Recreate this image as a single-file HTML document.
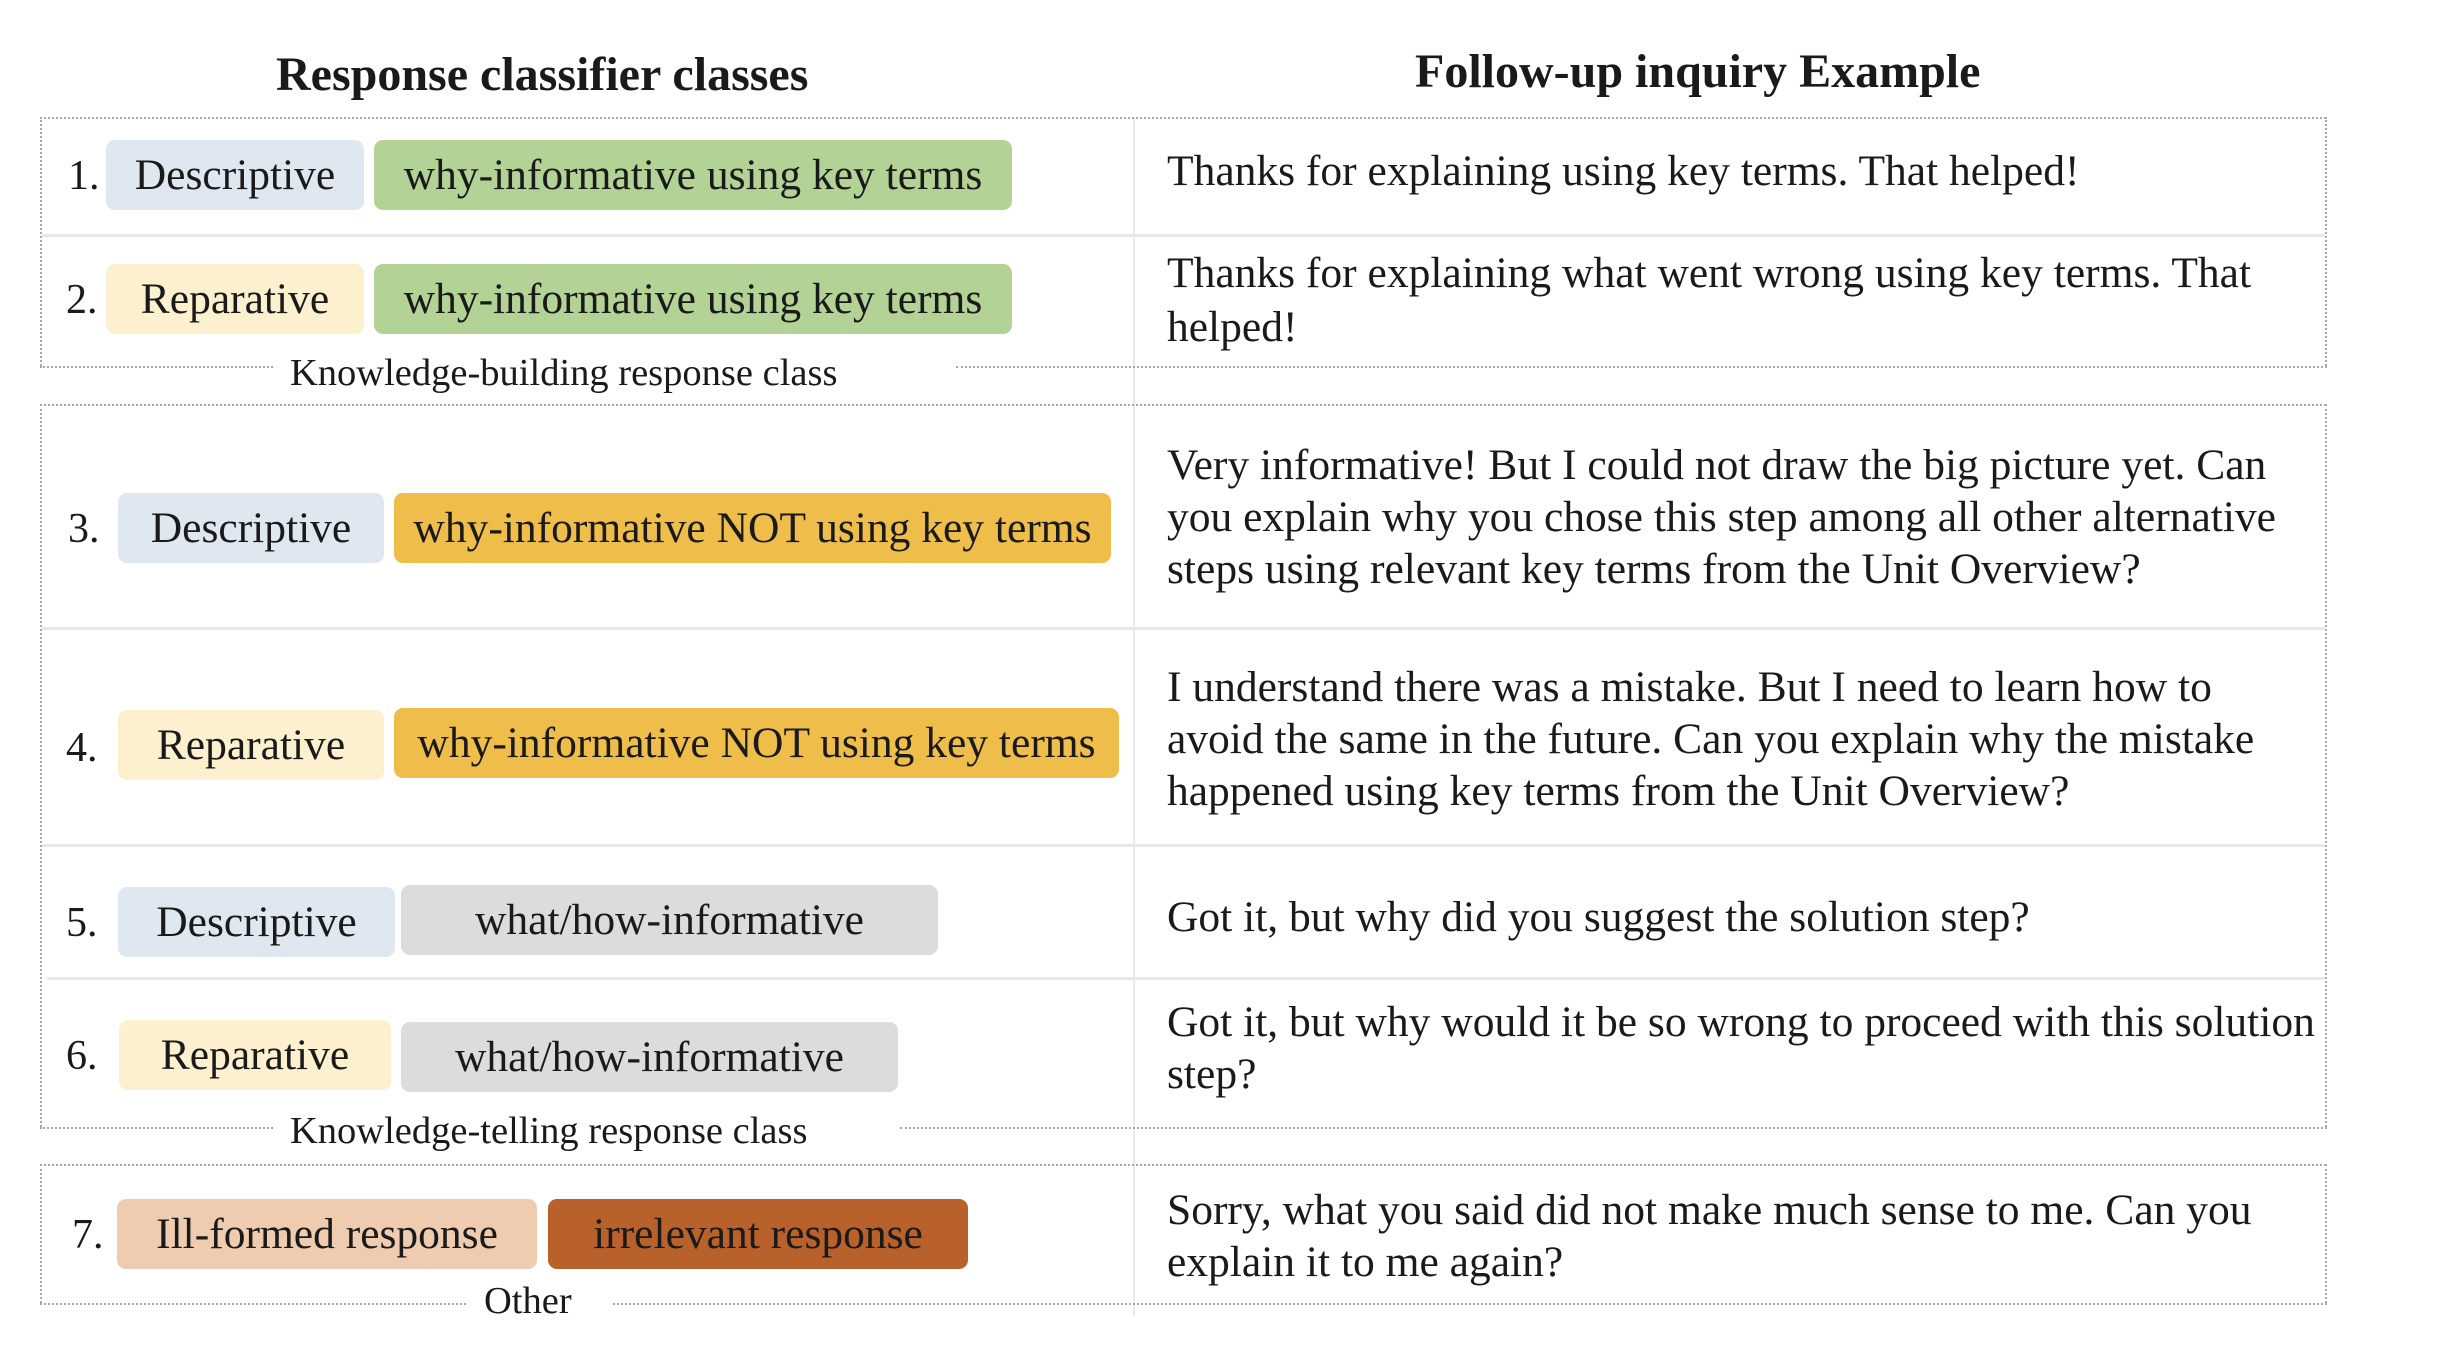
<!DOCTYPE html>
<html><head><meta charset="utf-8"><style>
body{margin:0;width:2442px;height:1356px;background:#fff;position:relative;overflow:hidden;font-family:"Liberation Serif",serif;color:#1a1a1a}
.a{position:absolute}
.t{position:absolute;font-weight:bold;font-size:48px;white-space:nowrap}
.hd{position:absolute;border-top:2px dotted #a8a8a8}
.vd{position:absolute;border-left:2px dotted #a8a8a8}
.hl{position:absolute;height:3px;background:#e8e8e8}
.p{position:absolute;height:70px;border-radius:9px;display:flex;align-items:center;justify-content:center;font-size:43.5px;white-space:nowrap}
.n{position:absolute;font-size:42px;line-height:70px}
.r{position:absolute;left:1167px;font-size:43.5px;line-height:52px;white-space:nowrap}
.lb{position:absolute;font-size:38.5px;white-space:nowrap;line-height:40px}
.b{background:#dfe7f0}.c{background:#fcf0cf}.g{background:#b3d396}.y{background:#efbd4a}.gr{background:#dcdcdc}.pe{background:#efccb0}.br{background:#b8612b}
</style></head><body>
<div class="t" style="left:276px;top:47px">Response classifier classes</div>
<div class="t" style="left:1415px;top:44px">Follow-up inquiry Example</div>

<div class="a" style="left:1133px;top:117px;width:2px;height:1199px;background:#e8e8e8"></div>

<div class="hd" style="left:40px;top:117px;width:2286px"></div>
<div class="vd" style="left:40px;top:117px;height:249px"></div>
<div class="vd" style="left:2325px;top:117px;height:249px"></div>
<div class="hd" style="left:40px;top:366px;width:233px"></div>
<div class="hd" style="left:956px;top:366px;width:1371px"></div>
<div class="lb" style="left:290px;top:353px">Knowledge-building response class</div>
<div class="hl" style="left:42px;top:234px;width:2283px"></div>

<div class="hd" style="left:40px;top:404px;width:2286px"></div>
<div class="vd" style="left:40px;top:404px;height:723px"></div>
<div class="vd" style="left:2325px;top:404px;height:723px"></div>
<div class="hd" style="left:40px;top:1127px;width:233px"></div>
<div class="hd" style="left:900px;top:1127px;width:1427px"></div>
<div class="lb" style="left:290px;top:1111px">Knowledge-telling response class</div>
<div class="hl" style="left:42px;top:627px;width:2283px"></div>
<div class="hl" style="left:42px;top:844px;width:2283px"></div>
<div class="hl" style="left:47px;top:977px;width:2278px"></div>

<div class="hd" style="left:40px;top:1164px;width:2286px"></div>
<div class="vd" style="left:40px;top:1164px;height:139px"></div>
<div class="vd" style="left:2325px;top:1164px;height:139px"></div>
<div class="hd" style="left:40px;top:1303px;width:426px"></div>
<div class="hd" style="left:613px;top:1303px;width:1714px"></div>
<div class="lb" style="left:484px;top:1281px">Other</div>

<div class="n" style="left:68px;top:141px">1.</div>
<div class="p b" style="left:106px;top:140px;width:258px">Descriptive</div>
<div class="p g" style="left:374px;top:140px;width:638px">why-informative using key terms</div>

<div class="n" style="left:66px;top:265px">2.</div>
<div class="p c" style="left:106px;top:264px;width:258px">Reparative</div>
<div class="p g" style="left:374px;top:264px;width:638px">why-informative using key terms</div>

<div class="n" style="left:68px;top:494px">3.</div>
<div class="p b" style="left:118px;top:493px;width:266px">Descriptive</div>
<div class="p y" style="left:394px;top:493px;width:717px">why-informative NOT using key terms</div>

<div class="n" style="left:66px;top:713px">4.</div>
<div class="p c" style="left:118px;top:710px;width:266px">Reparative</div>
<div class="p y" style="left:394px;top:708px;width:725px">why-informative NOT using key terms</div>

<div class="n" style="left:66px;top:888px">5.</div>
<div class="p b" style="left:118px;top:887px;width:277px">Descriptive</div>
<div class="p gr" style="left:401px;top:885px;width:537px">what/how-informative</div>

<div class="n" style="left:66px;top:1021px">6.</div>
<div class="p c" style="left:119px;top:1020px;width:272px">Reparative</div>
<div class="p gr" style="left:401px;top:1022px;width:497px">what/how-informative</div>

<div class="n" style="left:72px;top:1200px">7.</div>
<div class="p pe" style="left:117px;top:1199px;width:420px">Ill-formed response</div>
<div class="p br" style="left:548px;top:1199px;width:420px">irrelevant response</div>

<div class="r" style="top:145px">Thanks for explaining using key terms. That helped!</div>
<div class="r" style="top:246px;line-height:54px">Thanks for explaining what went wrong using key terms. That<br>helped!</div>
<div class="r" style="top:439px;line-height:52px">Very informative! But I could not draw the big picture yet. Can<br>you explain why you chose this step among all other alternative<br>steps using relevant key terms from the Unit Overview?</div>
<div class="r" style="top:661px">I understand there was a mistake. But I need to learn how to<br>avoid the same in the future. Can you explain why the mistake<br>happened using key terms from the Unit Overview?</div>
<div class="r" style="top:891px">Got it, but why did you suggest the solution step?</div>
<div class="r" style="top:996px">Got it, but why would it be so wrong to proceed with this solution<br>step?</div>
<div class="r" style="top:1184px">Sorry, what you said did not make much sense to me. Can you<br>explain it to me again?</div>
</body></html>
